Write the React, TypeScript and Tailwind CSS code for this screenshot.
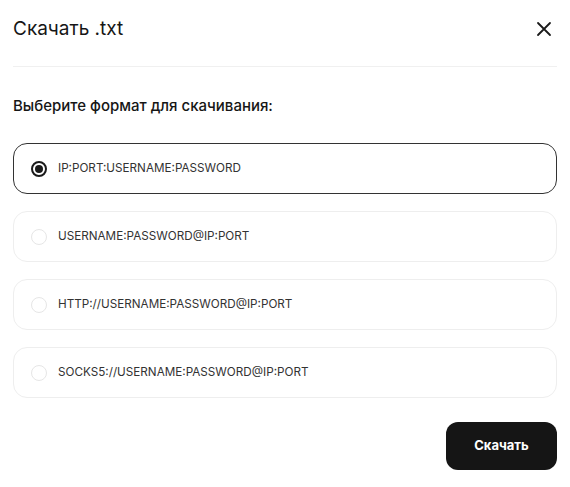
import { useState } from "react";

const formats = [
  "IP:PORT:USERNAME:PASSWORD",
  "USERNAME:PASSWORD@IP:PORT",
  "HTTP://USERNAME:PASSWORD@IP:PORT",
  "SOCKS5://USERNAME:PASSWORD@IP:PORT",
];

export default function App() {
  const [selected, setSelected] = useState(0);

  return (
    <div className="w-[570px] h-[487px] bg-white font-['Inter',sans-serif] text-[#161616]">
      <div className="flex items-center justify-between pl-[13px] pr-[16px] pt-[18px] pb-[26px]">
        <h1 className="text-[19px] leading-[22px] font-normal">Скачать .txt</h1>
        <button className="w-[20px] h-[20px] flex items-center justify-center">
          <svg width="16" height="16" viewBox="0 0 16 16" fill="none">
            <path
              d="M2 2L14 14M14 2L2 14"
              stroke="#1a1a1a"
              strokeWidth="1.8"
              strokeLinecap="round"
            />
          </svg>
        </button>
      </div>
      <div className="mx-[13px] h-px bg-[#f0f0f0]" />
      <div className="px-[13px] pt-[29px]">
        <p className="text-[15px] leading-[20px] font-medium">
          Выберите формат для скачивания:
        </p>
        <div className="flex flex-col gap-[17px] mt-[27px]">
          {formats.map((f, i) => (
            <button
              key={f}
              onClick={() => setSelected(i)}
              className={`flex items-center h-[51px] rounded-[14px] border pl-[17px] text-left ${
                selected === i ? "border-[#333333]" : "border-[#eeeeee]"
              }`}
            >
              <span
                className={`w-[16px] h-[16px] rounded-full flex items-center justify-center ${
                  selected === i
                    ? "border-2 border-[#1a1a1a]"
                    : "border border-[#e6e6e6]"
                }`}
              >
                {selected === i && (
                  <span className="w-[8px] h-[8px] rounded-full bg-[#1a1a1a]" />
                )}
              </span>
              <span className="ml-[11px] text-[11.7px] text-[#333333]">{f}</span>
            </button>
          ))}
        </div>
        <div className="flex justify-end mt-[24px]">
          <button className="w-[111px] h-[48px] rounded-[12px] bg-[#151515] text-white text-[13px] font-bold">
            Скачать
          </button>
        </div>
      </div>
    </div>
  );
}
